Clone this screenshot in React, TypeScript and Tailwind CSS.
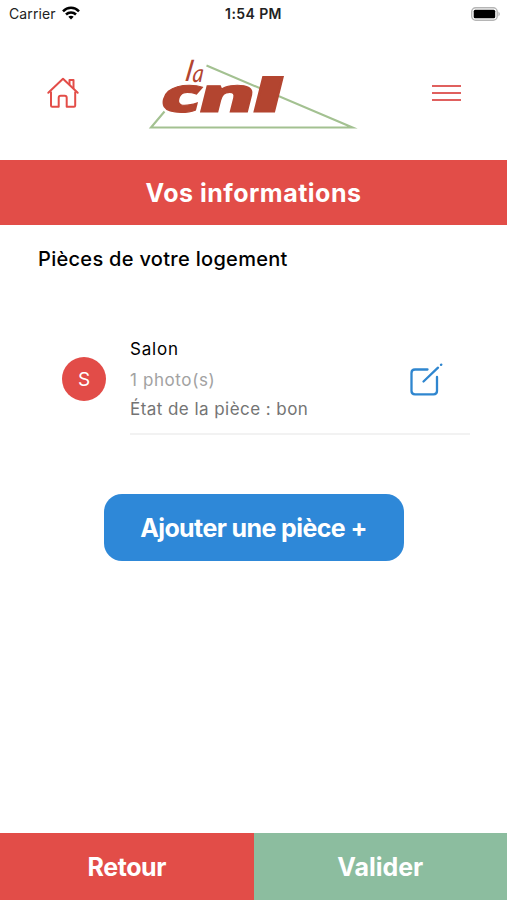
function StatusBar() {
  return (
    <div className="grid h-[27px] grid-cols-3 items-center px-[9px] text-[14px] text-[#222]">
      <div className="flex items-center gap-[6px]">
        <span className="tracking-[0.1px]">Carrier</span>
        <svg className="-mt-[2px]" width="18" height="14" viewBox="0 0 18 14" fill="none" stroke="#000" strokeWidth="2.5">
          <path d="M1 5.3C5.5.7 12.5.7 17 5.3" />
          <path d="M4 8.5C6.8 5.7 11.2 5.7 14 8.5" />
          <path d="M6.3 10.7C7.8 9.3 10.2 9.3 11.7 10.7L9 13.6Z" fill="#000" stroke="none" />
        </svg>
      </div>
      <span className="text-center text-[14px] font-semibold tracking-[0.4px] whitespace-nowrap">1:54 PM</span>
      <svg className="-mr-[3px] justify-self-end" width="31" height="16" viewBox="0 0 31 16">
        <rect x="1.7" y="1.7" width="25.5" height="12.6" rx="4" fill="#fff" stroke="#b5b5b5" strokeWidth="1.4" />
        <rect x="3.7" y="3.7" width="21.5" height="8.6" rx="1.5" fill="#000" />
        <path d="M28.5 5.5Q31 8 28.5 10.5Z" fill="#aaa" />
      </svg>
    </div>
  );
}

function Logo() {
  return (
    <svg width="212" height="84" viewBox="0 0 212 84" fill="none" aria-label="la cnl">
      <path d="M18.5 61.5L5 77.5H206.5L60.5 15.5" stroke="#a3c191" strokeWidth="2.1" strokeMiterlimit="10" />
      <g fill="#b34530">
        <g fontFamily="Lato, sans-serif" fontStyle="italic">
          <text transform="translate(38.5 31) skewX(-9) scale(1.05 1)" fontSize="29">
            l
          </text>
          <text transform="translate(46 32) skewX(-6) scale(0.85 1)" fontSize="25">
            a
          </text>
        </g>
        <g fontSize="49" fontWeight="800" fontFamily="'Open Sans', sans-serif" stroke="#b34530" strokeWidth="1.2">
          <text transform="translate(11.5 62) skewX(-14) scale(1.53 0.97)">c</text>
          <text transform="translate(49.5 62) skewX(-14) scale(1.73 0.97)">n</text>
          <text transform="translate(102 62) skewX(-14) scale(2.05 0.95)">l</text>
        </g>
      </g>
    </svg>
  );
}

function Header() {
  return (
    <header className="flex h-[133px] items-start justify-between pt-[23px] pr-[46px] pl-[46px]">
      <button className="mt-[26px]" aria-label="Accueil">
        <svg width="34" height="34" viewBox="0 0 34 34" fill="none" stroke="#e34d48" strokeWidth="2" strokeLinejoin="round">
          <path d="M5 15.5V29.5Q5 30.7 6.2 30.7H12.7V21.7Q12.7 19.7 14.7 19.7H18.7Q20.7 19.7 20.7 21.7V30.7H28Q29.2 30.7 29.2 29.5V15.5" />
          <path d="M2.3 16.7L17 2.8L31.7 16.7" strokeLinecap="round" />
          <path d="M23.5 8.8V4H27.5V12.8" />
        </svg>
      </button>
      <div className="-ml-[8px]">
        <Logo />
      </div>
      <button className="mt-[35px] flex flex-col gap-[5px]" aria-label="Menu">
        <span className="h-[2px] w-[29px] bg-[#e0605e]" />
        <span className="h-[2px] w-[29px] bg-[#e0605e]" />
        <span className="h-[2px] w-[29px] bg-[#e0605e]" />
      </button>
    </header>
  );
}

function RoomRow() {
  return (
    <div className="mt-[60px] flex pr-[37px] pl-[62px]">
      <div className="mt-[24px] flex size-[44px] shrink-0 items-center justify-center rounded-full bg-[#e24c48] pt-[2px] text-[19px] text-white">
        S
      </div>
      <div className="ml-[24px] flex h-[102px] flex-1 justify-between border-b-2 border-[#f2f2f2]">
        <div className="pt-px text-[17px] whitespace-nowrap">
          <p className="h-[31px] leading-[31px] tracking-[0.8px] text-black">Salon</p>
          <p className="h-[30px] leading-[30px] tracking-[0.6px] text-[#a2a2a2]">1 photo(s)</p>
          <p className="h-[29px] leading-[29px] tracking-[0.45px] text-[#747474]">État de la pièce : bon</p>
        </div>
        <button className="mt-[29px] mr-[26px] self-start" aria-label="Modifier">
          <svg width="34" height="35" viewBox="0 0 34 35" fill="none" stroke="#2f86cf" strokeWidth="2.3" strokeLinecap="round">
            <path d="M17.5 7.5H5Q1.5 7.5 1.5 11V29Q1.5 32.3 5 32.3H23.5Q27 32.3 27 29V15" />
            <path d="M13.5 19.5L28 5.7M31 2.9L31.3 2.6" />
          </svg>
        </button>
      </div>
    </div>
  );
}

export default function App() {
  return (
    <div className="flex h-[900px] w-full flex-col bg-white font-['Inter',sans-serif]">
      <StatusBar />
      <Header />
      <h1 className="flex h-[65px] items-center justify-center bg-[#e24d48] pt-[2px] text-[25px] font-bold tracking-[0.5px] text-white">
        Vos informations
      </h1>
      <main className="flex flex-1 flex-col">
        <h2 className="mt-[20px] ml-[38px] text-[20px] leading-[28px] font-medium tracking-[0.3px] text-black">
          Pièces de votre logement
        </h2>
        <RoomRow />
        <button className="mt-[59px] h-[67px] w-[300px] self-center rounded-[18px] bg-[#2e88d8] pt-[2px] text-[25px] font-bold tracking-[-0.6px] text-white">
          Ajouter une pièce +
        </button>
      </main>
      <footer className="flex h-[67px] text-[25px] font-bold text-white">
        <button className="flex-1 bg-[#e24d48] pt-[2px] tracking-[-0.4px]">Retour</button>
        <button className="flex-1 bg-[#8cbd9f] pt-[2px]">Valider</button>
      </footer>
    </div>
  );
}
